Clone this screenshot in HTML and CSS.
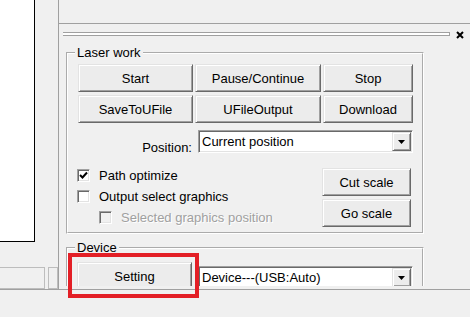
FILE: index.html
```html
<!DOCTYPE html>
<html lang="en">
<head>
    <meta charset="UTF-8">
    <meta name="viewport" content="width=device-width, initial-scale=1.0">
    <title>Laser work</title>
    <link rel="stylesheet" href="styles.css">
</head>
<body>
<div class="app">
    <div class="main">
        <div class="left">
            <div class="canvas"></div>
            <div class="status">
                <span class="cell cell-wide"></span>
                <span class="cell cell-narrow"></span>
            </div>
        </div>
        <div class="dock">
            <div class="dock-top"></div>
            <div class="panel">
                <div class="titlebar">
                    <div class="grip"></div>
                    <span class="close">
                        <svg width="8" height="8" viewBox="0 0 8 8"><path d="M1 1L7 7M7 1L1 7" stroke="#000" stroke-width="2"/></svg>
                    </span>
                </div>

                <fieldset class="group laser">
                    <legend>Laser work</legend>
                    <div class="btn-grid">
                        <button class="btn">Start</button>
                        <button class="btn">Pause/Continue</button>
                        <button class="btn">Stop</button>
                        <button class="btn">SaveToUFile</button>
                        <button class="btn">UFileOutput</button>
                        <button class="btn">Download</button>
                    </div>
                    <div class="pos-row">
                        <span class="pos-label">Position:</span>
                        <div class="combo">
                            <span class="combo-text">Current position</span>
                            <span class="drop">
                                <svg width="7" height="4" viewBox="0 0 7 4"><path d="M0 0H7L3.5 4Z" fill="#000"/></svg>
                            </span>
                        </div>
                    </div>
                    <div class="lower">
                        <div class="checks">
                            <div class="check">
                                <span class="box">
                                    <svg width="9" height="9" viewBox="0 0 9 9"><path d="M1 4L3.5 6.5L8 1.5" fill="none" stroke="#000" stroke-width="2"/></svg>
                                </span>
                                Path optimize
                            </div>
                            <div class="check">
                                <span class="box"></span>
                                Output select graphics
                            </div>
                            <div class="check sub disabled">
                                <span class="box"></span>
                                Selected graphics position
                            </div>
                        </div>
                        <div class="scale-btns">
                            <button class="btn">Cut scale</button>
                            <button class="btn">Go scale</button>
                        </div>
                    </div>
                </fieldset>

                <fieldset class="group device">
                    <legend>Device</legend>
                    <div class="dev-row">
                        <button class="btn setting">Setting</button>
                        <div class="combo">
                            <span class="combo-text">Device---(USB:Auto)</span>
                            <span class="drop">
                                <svg width="7" height="4" viewBox="0 0 7 4"><path d="M0 0H7L3.5 4Z" fill="#000"/></svg>
                            </span>
                        </div>
                    </div>
                </fieldset>
            </div>
        </div>
    </div>
    <div class="bottom"></div>
</div>
<div class="highlight"></div>
</body>
</html>
```

FILE: styles.css
```css
body {
    margin: 0;
    background-color: #f0f0f0;
    font-family: 'Liberation Sans', Arial, sans-serif;
    font-size: 13px;
    color: #000;
    overflow: hidden;
}

.app {
    display: flex;
    flex-direction: column;
    width: 470px;
    height: 317px;
}

.main {
    display: flex;
    height: 289px;
}

.bottom {
    flex: 1;
    border-top: 1px solid #a0a0a0;
}

/* left side: drawing area + status cells */
.left {
    width: 58px;
    display: flex;
    flex-direction: column;
}

.canvas {
    width: 34px;
    height: 241px;
    background: #fff;
    border-right: 1px solid #000;
    border-bottom: 1px solid #000;
}

.status {
    margin-top: auto;
    display: flex;
    height: 22px;
}

.cell {
    box-sizing: border-box;
    height: 22px;
    border: 1px solid #bdbdbd;
}

.cell-wide {
    width: 45px;
    border-left: none;
}

.cell-narrow {
    width: 10px;
    margin-left: 3px;
}

/* docked panel */
.dock {
    flex: 1;
    display: flex;
    flex-direction: column;
    border-left: 1px solid #a0a0a0;
    padding-bottom: 3px;
}

.dock-top {
    height: 23px;
    flex: none;
    border-bottom: 1px solid #a0a0a0;
}

.panel {
    flex: 1;
    overflow: hidden;
}

.titlebar {
    display: flex;
    height: 21px;
    padding-left: 4px;
}

.grip {
    flex: 1;
    height: 2px;
    margin-top: 8px;
    background: #fff;
    border-top: 1px solid #a0a0a0;
    border-bottom: 1px solid #a0a0a0;
    border-right: 1px solid #a0a0a0;
}

.close {
    flex: 0 0 20px;
    display: flex;
    justify-content: center;
    padding-top: 7px;
    height: 8px;
}

/* group boxes */
.group {
    box-sizing: border-box;
    width: 358px;
    margin: 0 0 0 7px;
    border: 2px groove #fff;
    padding: 4px 9px 4px 10px;
}

.group legend {
    margin-left: -3px;
    padding: 0 2px;
    line-height: 15px;
}

.btn {
    box-sizing: border-box;
    height: 28px;
    margin: 0;
    padding: 0;
    font-family: inherit;
    font-size: 13px;
    color: #000;
    background: #ececec;
    border: 1px solid;
    border-color: #e3e3e3 #696969 #696969 #e3e3e3;
    box-shadow: inset 1px 1px 0 #fff, inset -1px -1px 0 #a0a0a0;
}

.btn-grid {
    display: grid;
    grid-template-columns: 115px 126px 90px;
    column-gap: 2px;
    row-gap: 3px;
}

.pos-row {
    display: flex;
    align-items: flex-end;
    margin-top: 7px;
}

.pos-label {
    width: 114px;
    text-align: right;
    margin-right: 6px;
    line-height: 15px;
    margin-bottom: -2px;
}

.combo {
    box-sizing: border-box;
    display: flex;
    align-items: center;
    width: 215px;
    height: 23px;
    background: #fff;
    border: 1px solid;
    border-color: #a0a0a0 #fff #fff #a0a0a0;
    box-shadow: inset 1px 1px 0 #696969, inset -1px -1px 0 #e3e3e3;
}

.combo-text {
    flex: 1;
    padding-left: 3px;
    white-space: nowrap;
    overflow: hidden;
}

.drop {
    box-sizing: border-box;
    width: 19px;
    height: 19px;
    margin-right: 1px;
    display: flex;
    align-items: center;
    justify-content: center;
    background: #ececec;
    border: 1px solid;
    border-color: #e3e3e3 #696969 #696969 #e3e3e3;
    box-shadow: inset 1px 1px 0 #fff, inset -1px -1px 0 #a0a0a0;
}

.lower {
    display: flex;
    justify-content: space-between;
    margin-top: 12px;
}

.check {
    display: flex;
    align-items: center;
    height: 21px;
    white-space: nowrap;
}

.box {
    box-sizing: border-box;
    width: 13px;
    height: 13px;
    margin-right: 9px;
    margin-left: -1px;
    display: flex;
    align-items: center;
    justify-content: center;
    background: #fff;
    border: 1px solid;
    border-color: #a0a0a0 #fff #fff #a0a0a0;
    box-shadow: inset 1px 1px 0 #696969, inset -1px -1px 0 #e3e3e3;
}

.check.sub {
    padding-left: 22px;
}

.check.disabled {
    color: #a0a0a0;
    text-shadow: 1px 1px 0 #fff;
}

.check.disabled .box {
    background: #f0f0f0;
}

.scale-btns {
    display: flex;
    flex-direction: column;
    gap: 3px;
    padding-top: 3px;
    margin-right: 2px;
}

.scale-btns .btn {
    width: 89px;
}

.device {
    margin-top: 6px;
    padding-top: 7px;
}

.dev-row {
    display: flex;
    align-items: flex-start;
}

.setting {
    width: 115px;
    margin-left: -1px;
    margin-right: 6px;
}

.dev-row .combo {
    margin-top: 4px;
}

/* red annotation frame */
.highlight {
    position: absolute;
    left: 68px;
    top: 253px;
    width: 131px;
    height: 45px;
    box-sizing: border-box;
    border: 4px solid #e31f26;
}
```
